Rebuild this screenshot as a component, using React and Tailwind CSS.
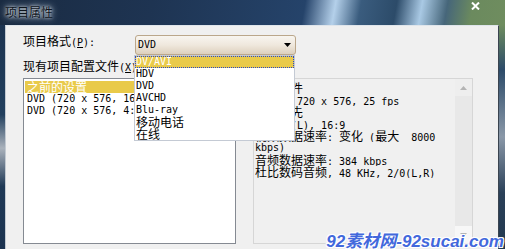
import React from "react";

const CJK = /([\u2E80-\u9FFF\uF900-\uFAFF\uFF00-\uFFEF\u3000-\u303F]+)/;
const isCjk = (s) => /[\u2E80-\u9FFF\uF900-\uFAFF\uFF00-\uFFEF\u3000-\u303F]/.test(s);

// mixes 12px CJK with 6px-wide mono latin, like the old SimSun dialogs
function Txt({ children }) {
    return String(children)
        .split(CJK)
        .map((s, i) =>
            s === "" ? null : isCjk(s) ? (
                <span key={i} className="font-['Noto_Sans_CJK_SC',sans-serif] text-[12px]">{s}</span>
            ) : (
                <span key={i}>{s}</span>
            )
        );
}

function Row({ text, active, className = "" }) {
    return (
        <div
            className={`h-[12px] leading-[12px] whitespace-pre overflow-hidden ${className} ${
                active ? "bg-[#e9ca4a] text-white" : "text-black"
            }`}
        >
            <Txt>{text}</Txt>
        </div>
    );
}

const formats = ["DV/AVI", "HDV", "DVD", "AVCHD", "Blu-ray", "移动电话", "在线"];
const presets = ["之前的设置", "DVD (720 x 576, 16:9)", "DVD (720 x 576, 4:3)"];
const info = [
    "配置文件",
    "分辨率 720 x 576, 25 fps",
    "下场优先",
    "宽高比(L), 16:9",
    "视频数据速率: 变化 (最大  8000",
    "kbps)",
    "音频数据速率: 384 kbps",
    "杜比数码音频, 48 KHz, 2/0(L,R)",
];

export default function App() {
    return (
        <div className="w-[505px] h-[249px] overflow-hidden relative flex flex-col font-['DejaVu_Sans_Mono','Noto_Sans_CJK_SC',monospace] text-[10px] leading-[12px]">
            {/* title bar */}
            <div className="h-[25px] shrink-0 flex items-start justify-between pl-[5px] pr-[25px] pt-[6px] bg-[linear-gradient(100deg,#1a2b42_0%,#1e3452_30%,#25436a_60%,#b4d0ea_66%,#3a5c7e_71%,#2c4b69_78%,#a9c9e4_83%,#46667a_88%,#6b8a5e_93%,#6f8d5f_100%)]">
                <div className="font-['Noto_Sans_CJK_SC',sans-serif] text-[12px] leading-[12px] text-[#0d141c] [text-shadow:0_0_3px_#dfe6ee,0_0_6px_#b8c4d0,0_0_10px_#8898a8]">
                    项目属性
                </div>
                <svg width="9" height="8" viewBox="0 0 9 8" className="-mt-[4px]">
                    <path d="M1 0.5 L8 7.5 M8 0.5 L1 7.5" stroke="#fff" strokeWidth="2" />
                </svg>
            </div>

            <div className="flex flex-1">
                <div className="w-[5px] bg-[linear-gradient(#1c3350,#22405e_40%,#aab2bc_55%,#1f3956_72%,#1c3350)]" />

                {/* dialog body */}
                <div className="flex-1 bg-[#f0f0f0] border-t border-t-[#dfe5eb] border-l border-l-[#c3cad2] border-r border-r-[#3a4450] pl-[17px]">
                    <div className="mt-[9px] flex items-start">
                        <div className="w-[112px] whitespace-pre">
                            <Txt>项目格式(</Txt>
                            <u>P</u>
                            <Txt>):</Txt>
                        </div>
                        <div className="relative">
                            <div className="w-[161px] h-[20px] rounded-[3px] border border-[#bba78b] bg-[linear-gradient(#f8f5f0,#efe8dd_50%,#ddd0bd)] flex items-center justify-between pl-[2px] pr-[4px]">
                                <span>DVD</span>
                                <svg width="7" height="4" viewBox="0 0 7 4">
                                    <path d="M0 0 H7 L3.5 4 Z" fill="#000" />
                                </svg>
                            </div>
                            {/* open dropdown list */}
                            <div className="absolute z-10 top-[20px] -left-[1px] w-[161px] bg-white border border-[#c4cad4]">
                                {formats.map((f, i) => (
                                    <Row
                                        key={f}
                                        text={f}
                                        active={i === 0}
                                        className={`pl-[1px] ${
                                            i === 0 ? "outline outline-1 outline-dotted outline-[#2a48c8] -outline-offset-1" : ""
                                        }`}
                                    />
                                ))}
                            </div>
                        </div>
                    </div>

                    <div className="mt-[5px] whitespace-pre">
                        <Txt>现有项目配置文件(</Txt>
                        <u>X</u>
                        <Txt>):</Txt>
                    </div>

                    <div className="mt-[4px] flex gap-[17px]">
                        <div className="w-[213px] h-[166px] bg-white border border-[#858a92] pt-[2px] px-[1px]">
                            {presets.map((p, i) => (
                                <Row key={p} text={p} active={i === 0} className="pl-[2px]" />
                            ))}
                        </div>

                        <div className="w-[220px] h-[166px] border border-[#d6d6d6] flex">
                            <div className="flex-1 pt-[3px] pl-[1px]">
                                {info.map((t) => (
                                    <Row key={t} text={t} />
                                ))}
                            </div>
                            <div className="w-[17px] bg-[#e8e8e8] flex flex-col justify-between">
                                <div className="h-[17px] bg-[#eeeeee] flex items-center justify-center">
                                    <svg width="7" height="4" viewBox="0 0 7 4">
                                        <path d="M0 4 H7 L3.5 0 Z" fill="#b4b4b4" />
                                    </svg>
                                </div>
                                <div className="h-[17px] bg-[#f7f7f7] flex items-center justify-center">
                                    <svg width="7" height="4" viewBox="0 0 7 4">
                                        <path d="M0 0 H7 L3.5 4 Z" fill="#b4b4b4" />
                                    </svg>
                                </div>
                            </div>
                        </div>
                    </div>
                </div>

                <div className="w-[6px] bg-[linear-gradient(#6f8d5f,#2c4b69_20%,#8a98a8_50%,#2a4058_75%,#22384f)]" />
            </div>

            {/* site watermark */}
            <div className="absolute right-[1px] -bottom-[4px] font-['Liberation_Sans','Noto_Sans_CJK_SC',sans-serif] text-[17px] leading-[22px] font-bold italic text-[#4268dc] [text-shadow:1px_1px_0_#fff,-1px_-1px_0_#fff,1px_-1px_0_#fff,-1px_1px_0_#fff]">
                92素材网-92sucai.com
            </div>
        </div>
    );
}
